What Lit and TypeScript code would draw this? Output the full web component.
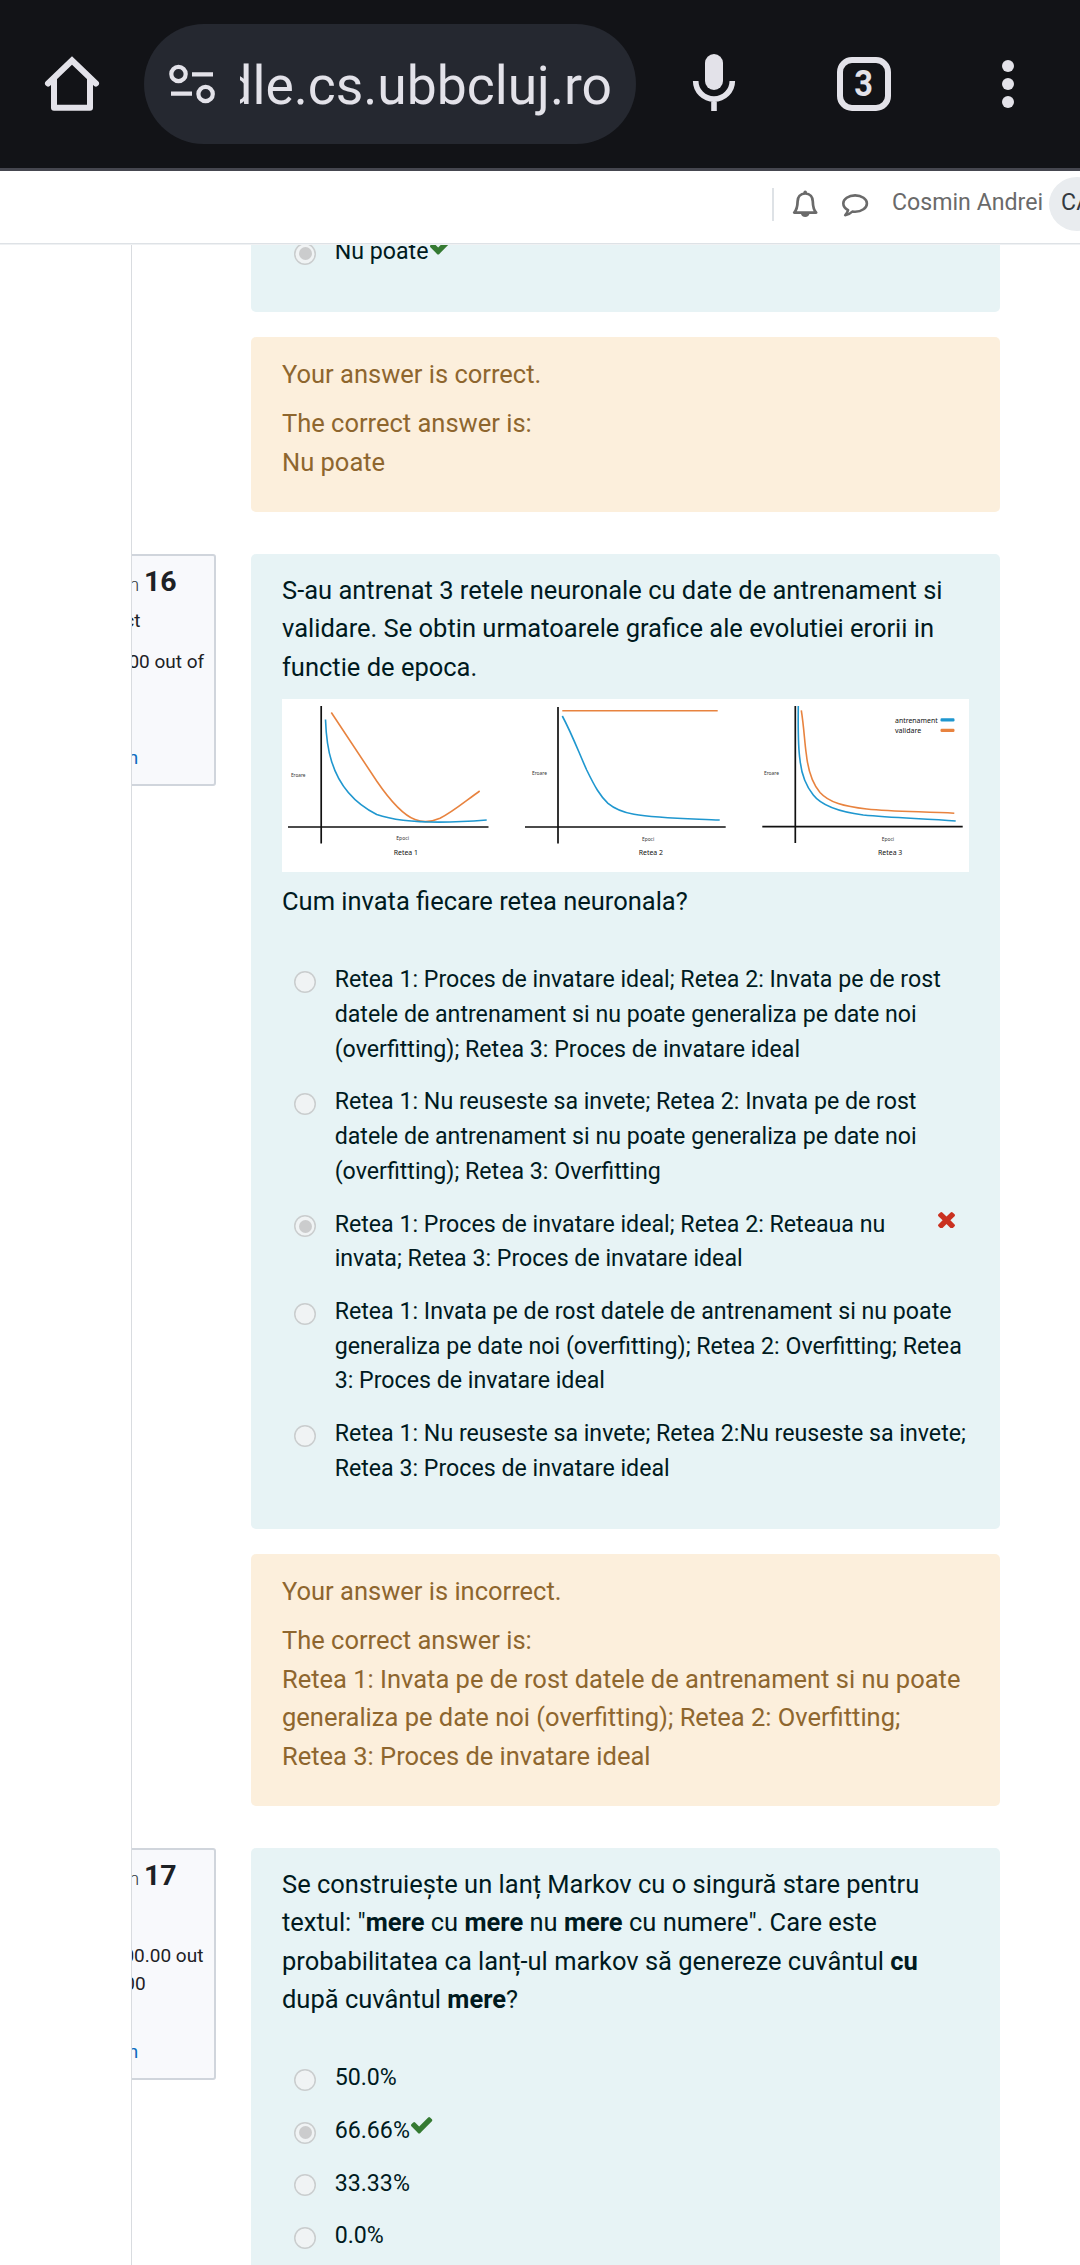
import { LitElement, html, css, svg, nothing } from "lit";
import { customElement, property } from "lit/decorators.js";

const checkIcon = html`<svg class="check" viewBox="121 334 1550 1188" preserveAspectRatio="none">
  <path fill="#357a32" d="M1671 566q0 40-28 68l-724 724-136 136q-28 28-68 28t-68-28l-136-136-362-362q-28-28-28-68t28-68l136-136q28-28 68-28t68 28l294 295 656-657q28-28 68-28t68 28l136 136q28 28 28 68z"/>
</svg>`;

const crossIcon = html`<svg class="cross" viewBox="302 366 1188 1188" preserveAspectRatio="none">
  <path fill="#ca3120" d="M1490 1322q0 40-28 68l-136 136q-28 28-68 28t-68-28l-294-294-294 294q-28 28-68 28t-68-28l-136-136q-28-28-28-68t28-68l294-294-294-294q-28-28-28-68t28-68l136-136q28-28 68-28t68 28l294 294 294-294q28-28 68-28t68 28l136 136q28 28 28 68t-28 68l-294 294 294 294q28 28 28 68z"/>
</svg>`;

@customElement("browser-bar")
class BrowserBar extends LitElement {
  static styles = css`
    :host {
      display: flex;
      align-items: center;
      height: 168px;
      background: #121317;
      border-bottom: 3px solid #45464f;
      color: #e3e2e9;
    }
    svg { display: block; flex: none; }
    .home { margin-left: 42px; }
    .pill {
      display: flex;
      align-items: center;
      box-sizing: border-box;
      width: 492px;
      height: 120px;
      margin-left: 42px;
      padding: 0 24px 0 24px;
      border-radius: 60px;
      background: #252830;
    }
    .url {
      display: flex;
      justify-content: flex-end;
      flex: 1;
      margin-left: 24px;
      overflow: hidden;
      white-space: nowrap;
      font-size: 53.4px;
      line-height: 72px;
      padding-top: 3px;
    }
    .mic { margin-left: 42px; }
    .tabs {
      display: flex;
      align-items: center;
      justify-content: center;
      box-sizing: border-box;
      width: 54px;
      height: 54px;
      margin-left: 87px;
      border: 6px solid #e3e2e9;
      border-radius: 15px;
      font-weight: 700;
      font-size: 37px;
      line-height: 42px;
    }
    .count { transform: scaleX(0.88); }
    .dots { margin-left: 99px; }
  `;
  render() {
    return html`
      <svg class="home" width="60" height="60" viewBox="42 54 60 60" fill="none" stroke="#e3e2e9" stroke-width="6">
        <path stroke-linecap="round" d="M48 83.500L72 60.500L96 83.500"/>
        <path stroke-linejoin="round" d="M54 79V107.800H90V79"/>
      </svg>
      <div class="pill">
        <svg width="48" height="48" viewBox="168 60 48 48" fill="none" stroke="#e3e2e9" stroke-width="4.200">
          <circle cx="178.500" cy="74" r="7.200"/><path d="M192 74.300H213M171 93.700H192"/>
          <circle cx="205.600" cy="94" r="7.200"/>
        </svg>
        <div class="url">moodle.cs.ubbcluj.ro</div>
      </div>
      <svg class="mic" width="72" height="72" viewBox="678 48 72 72">
        <rect x="705" y="54" width="18" height="36" rx="9" fill="#e3e2e9"/>
        <path d="M695.700 81a18.300 18 0 0 0 36.600 0M714 99V111" fill="none" stroke="#e3e2e9" stroke-width="5.600"/>
      </svg>
      <div class="tabs"><span class="count">3</span></div>
      <svg class="dots" width="36" height="54" viewBox="990 57 36 54" fill="#e3e2e9">
        <circle cx="1008" cy="66" r="6"/><circle cx="1008" cy="84" r="6"/><circle cx="1008" cy="102" r="6"/>
      </svg>`;
  }
}

@customElement("site-header")
class SiteHeader extends LitElement {
  static styles = css`
    :host {
      display: flex;
      align-items: flex-start;
      box-sizing: border-box;
      height: 74px;
      overflow: hidden;
      border-bottom: 1px solid #eff1f3;
      box-shadow: inset 0 -1px #dee2e6;
      background: #fff;
      color: #6a6a6a;
      font-size: 23.150px;
      line-height: 34px;
      white-space: nowrap;
    }
    .rule { flex: none; width: 2px; height: 33px; margin: 17px 0 0 772px; background: #dee2e6; }
    svg { display: block; flex: none; }
    .bell { margin: 18px 0 0 16px; }
    .chat { margin: 18px 0 0 20px; }
    .name { margin: 15px 0 0 22px; flex: none; }
    .avatar {
      flex: none;
      box-sizing: border-box;
      width: 56px;
      height: 54px;
      margin: 6px 0 0 6px;
      padding-left: 12px;
      border-radius: 50%;
      background: #e9ecef;
      color: #343a40;
      line-height: 52px;
    }
  `;
  render() {
    return html`
      <div class="rule"></div>
      <svg class="bell" width="30" height="32" viewBox="790 189 30 32">
        <path d="M805.200 193.500c-5.100 0-7.500 3.700-7.600 7.900-.1 5.500-.9 8.500-3.400 11.200h22c-2.500-2.700-3.300-5.700-3.400-11.200-.1-4.200-2.500-7.900-7.600-7.900z" fill="none" stroke="#6a6a6a" stroke-width="2.700" stroke-linejoin="round"/>
        <circle cx="805.200" cy="192.300" r="1.800" fill="#6a6a6a"/>
        <path d="M800.800 213h8.800c-.3 2.600-2 4.100-4.400 4.100s-4.100-1.500-4.400-4.100z" fill="#6a6a6a"/>
      </svg>
      <svg class="chat" width="30" height="32" viewBox="840 189 30 32">
        <path d="M855.100 195.400c-6.600 0-11.800 3.600-11.800 8.100 0 2.700 1.900 5.100 4.800 6.600-.4 2.100-1.400 3.600-2.900 5 2.900-.4 5.300-1.500 7.200-3.600.9.100 1.800.2 2.700.2 6.600 0 11.800-3.700 11.800-8.200s-5.200-8.100-11.800-8.100z" fill="none" stroke="#6a6a6a" stroke-width="2.600" stroke-linejoin="round"/>
      </svg>
      <div class="name">Cosmin Andrei</div>
      <div class="avatar">CA</div>`;
  }
}

@customElement("error-charts")
class ErrorCharts extends LitElement {
  static styles = css`
    :host { display: block; height: 172.700px; background: #fff; }
    svg { display: block; width: 100%; height: 100%; }
    .axis { stroke: #111; stroke-width: 1.700; fill: none; }
    .train { stroke: #1f97cf; stroke-width: 1.600; fill: none; }
    .valid { stroke: #e8833f; stroke-width: 1.600; fill: none; }
    text { font-family: "Noto Sans", "Open Sans", sans-serif; fill: #111; }
    .tiny { font-size: 5.500px; fill: #333; }
    .label { font-size: 8px; }
  `;
  render() {
    const charts = [
      {
        axis: "M39.200 7V144.600M6 128H206.500",
        train: "M43.500 20.500C44 34 45.500 50 49.700 62.700C56 83 68 102 94.700 115.500C119 124 155 125 204.700 121",
        valid: "M49.300 13.500L95 82.500C106 98.500 121 116 133 120.600C140 123.400 149 123.300 158 119.300C170 113.500 183 102.500 197.700 92",
        err: [9, 77.6, 14.5], ep: [114.3, 140.8, 12.7], name: [111.7, 156.3, 24.3, "Retea 1"],
      },
      {
        axis: "M276 8V144.600M243 128H443.700",
        train: "M280.300 17C290 35 297 54 304.700 71C313 88 318 97 326 104.300C334 111 343 113.600 352 115.300C375 119.500 410 119.700 437.700 121",
        valid: "M280.300 11.700H435.700",
        err: [250, 75.8, 15], ep: [360, 141.6, 12.2], name: [356.7, 156.3, 24.3, "Retea 2"],
      },
      {
        axis: "M513.300 7V144M480.300 127.700H680.700",
        train: "M516.300 7C516 30 516.300 50 518 61C519.500 76 524 87 531.300 96C539 106 555 112.500 581.300 116C612 119 643 119.500 673.700 122",
        valid: "M519.300 11.300C522 28 522.500 43 524.300 55C526 71 530 84 538 93.500C547 103.500 562 107.500 584.700 110C612 112.800 643 112.500 672.300 114.300",
        err: [482, 75.8, 15], ep: [599.700, 141.6, 12.3], name: [596, 156.3, 24.3, "Retea 3"],
      },
    ];
    return html`<svg viewBox="0 0 687 172.700" preserveAspectRatio="none">
      ${charts.map((c) => svg`
        <path class="axis" d=${c.axis}/><path class="valid" d=${c.valid}/><path class="train" d=${c.train}/>
        <text class="tiny" x=${c.err[0]} y=${c.err[1]} textLength=${c.err[2]} lengthAdjust="spacingAndGlyphs">Eroare</text>
        <text class="tiny" x=${c.ep[0]} y=${c.ep[1]} textLength=${c.ep[2]} lengthAdjust="spacingAndGlyphs">Epoci</text>
        <text class="label" x=${c.name[0]} y=${c.name[1]} textLength=${c.name[2]} lengthAdjust="spacingAndGlyphs">${c.name[3]}</text>`)}
      <text class="label" x="613" y="23.800" textLength="42.700" lengthAdjust="spacingAndGlyphs">antrenament</text>
      <text class="label" x="613" y="33.800" textLength="26.200" lengthAdjust="spacingAndGlyphs">validare</text>
      <rect x="658.500" y="19.200" width="14" height="3.200" rx="1.200" fill="#1f97cf"/>
      <rect x="658.500" y="29.800" width="14" height="3.200" rx="1.200" fill="#e8833f"/>
    </svg>`;
  }
}

interface Choice { text: string; picked?: boolean; mark?: "right" | "wrong"; }

@customElement("choice-list")
class ChoiceList extends LitElement {
  @property({ attribute: false }) choices: Choice[] = [];
  static styles = css`
    :host { display: flex; flex-direction: column; gap: 18px; font-size: 23.180px; line-height: 34.730px; }
    .row { display: flex; align-items: flex-start; padding-left: 12px; }
    .radio {
      flex: none;
      display: grid;
      place-items: center;
      box-sizing: border-box;
      width: 22px;
      height: 22px;
      margin: 8.800px 18.700px 0 0;
      border-radius: 50%;
      background: #f0f3f4;
      box-shadow: inset 0 0 0 1.500px #c9cdce;
    }
    .dot { width: 13px; height: 13px; border-radius: 50%; background: #cbcccd; }
    svg { display: block; flex: none; }
    .check { width: 21.300px; height: 16.600px; margin: 4.200px 0 0 1.600px; }
    .cross { width: 17px; height: 16.600px; margin: 5px 14px 0 auto; }
  `;
  render() {
    return this.choices.map((c) => html`<div class="row">
      <span class="radio">${c.picked ? html`<span class="dot"></span>` : nothing}</span>
      <span>${c.text}</span>
      ${c.mark === "right" ? checkIcon : c.mark === "wrong" ? crossIcon : nothing}
    </div>`);
  }
}

@customElement("question-info")
class QuestionInfo extends LitElement {
  @property() number = "";
  @property() state = "";
  @property() grade = "";
  static styles = css`
    :host {
      display: block;
      box-sizing: border-box;
      width: 166px;
      height: 231.500px;
      padding: 8px 9.500px 8px 13px;
      border: 2px solid #d0d5dc;
      border-radius: 3px;
      background: #f8f9fc;
      color: #1d2125;
      font-size: 19px;
      line-height: 28.300px;
    }
    .title { font-weight: 300; line-height: 36px; color: #343a40; }
    .no { font-size: 28.500px; font-weight: 700; color: #1d2125; }
    .state { margin-top: 4px; }
    .grade { margin-top: 12.800px; }
    .flag { margin-top: 11px; color: #0f6cbf; }
    .flag span { display: block; }
  `;
  render() {
    return html`
      <div class="title">Question <span class="no">${this.number}</span></div>
      <div class="state">${this.state}</div>
      <div class="grade">${this.grade}</div>
      <div class="flag"><span>Flag</span><span>question</span></div>`;
  }
}

@customElement("app-root")
class AppRoot extends LitElement {
  static styles = css`
    :host {
      display: flex;
      flex-direction: column;
      width: 1080px;
      height: 2265px;
      overflow: hidden;
      background: #fff;
      font-family: Roboto, "Liberation Sans", sans-serif;
      font-size: 25.490px;
      line-height: 38.450px;
    }
    browser-bar, site-header { flex: none; }
    .page { display: flex; flex: 1; min-height: 0; overflow: hidden; }
    .drawer { flex: none; box-sizing: border-box; width: 132px; border-right: 1px solid #d9dce0; }
    .main { flex: 1; overflow: hidden; }
    .question { display: grid; grid-template-columns: 166px 749px; column-gap: 35px; align-items: start; margin: 0 0 42px -82px; }
    .body { grid-column: 2; display: flex; flex-direction: column; gap: 25.200px; }
    .card { box-sizing: border-box; padding: 16.700px 31px 43.400px; border-radius: 5px; background: #e7f3f5; color: #001a1e; }
    .first { padding-top: 0; margin-top: -11px; }
    .feedback { box-sizing: border-box; padding: 17.800px 31px 31px; border-radius: 5px; background: #fcefdc; color: #8e662e; }
    p { margin: 0; }
    .feedback p + p { margin-top: 10.700px; }
    .answer { display: block; }
    error-charts { margin: 13px 0 10.200px; }
    .spaced { margin-top: 41.600px; }
  `;
  render() {
    return html`
      <browser-bar></browser-bar>
      <site-header></site-header>
      <div class="page">
        <div class="drawer"></div>
        <div class="main">
          <section class="question">
            <div class="body">
              <div class="card first">
                <choice-list .choices=${[{ text: "Nu poate", picked: true, mark: "right" }]}></choice-list>
              </div>
              <div class="feedback">
                <p>Your answer is correct.</p>
                <p>The correct answer is:<span class="answer">Nu poate</span></p>
              </div>
            </div>
          </section>
          <section class="question">
            <question-info number="16" state="Incorrect" grade="Mark 0.00 out of 100.00"></question-info>
            <div class="body">
              <div class="card">
                <p>S-au antrenat 3 retele neuronale cu date de antrenament si validare. Se obtin urmatoarele grafice ale evolutiei erorii in functie de epoca.</p>
                <error-charts></error-charts>
                <p>Cum invata fiecare retea neuronala?</p>
                <choice-list class="spaced" .choices=${[
                  { text: "Retea 1: Proces de invatare ideal; Retea 2: Invata pe de rost datele de antrenament si nu poate generaliza pe date noi (overfitting); Retea 3: Proces de invatare ideal" },
                  { text: "Retea 1: Nu reuseste sa invete; Retea 2: Invata pe de rost datele de antrenament si nu poate generaliza pe date noi (overfitting); Retea 3: Overfitting" },
                  { text: "Retea 1: Proces de invatare ideal; Retea 2: Reteaua nu invata; Retea 3: Proces de invatare ideal", picked: true, mark: "wrong" },
                  { text: "Retea 1: Invata pe de rost datele de antrenament si nu poate generaliza pe date noi (overfitting); Retea 2: Overfitting; Retea 3: Proces de invatare ideal" },
                  { text: "Retea 1: Nu reuseste sa invete; Retea 2:Nu reuseste sa invete; Retea 3: Proces de invatare ideal" },
                ]}></choice-list>
              </div>
              <div class="feedback">
                <p>Your answer is incorrect.</p>
                <p>The correct answer is:<span class="answer">Retea 1: Invata pe de rost datele de antrenament si nu poate generaliza pe date noi (overfitting); Retea 2: Overfitting; Retea 3: Proces de invatare ideal</span></p>
              </div>
            </div>
          </section>
          <section class="question">
            <question-info number="17" state="Correct" grade="Mark 100.00 out of 100.00"></question-info>
            <div class="body">
              <div class="card">
                <p>Se construiește un lanț Markov cu o singură stare pentru textul: "<b>mere</b> cu <b>mere</b> nu <b>mere</b> cu numere". Care este probabilitatea ca lanț-ul markov să genereze cuvântul <b>cu</b> după cuvântul <b>mere</b>?</p>
                <choice-list class="spaced" .choices=${[
                  { text: "50.0%" },
                  { text: "66.66%", picked: true, mark: "right" },
                  { text: "33.33%" },
                  { text: "0.0%" },
                ]}></choice-list>
              </div>
            </div>
          </section>
        </div>
      </div>`;
  }
}
